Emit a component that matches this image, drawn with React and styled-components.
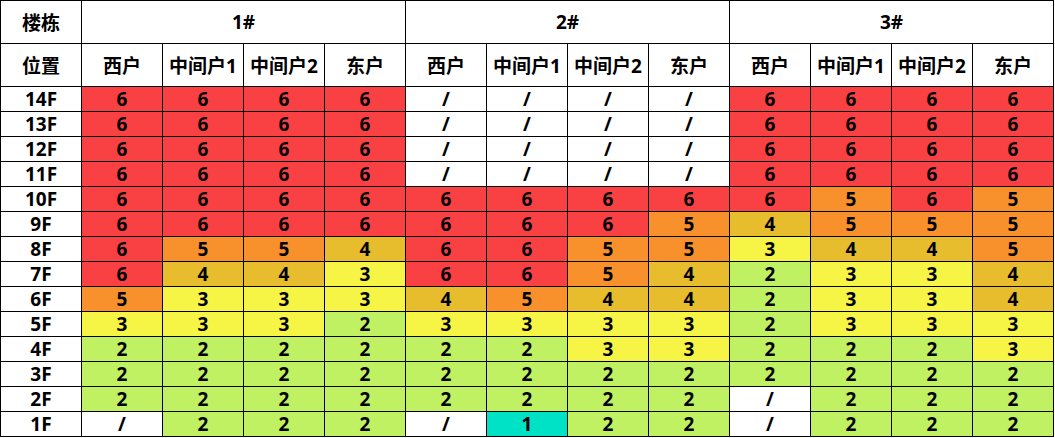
import React from "react";
import styled, { createGlobalStyle } from "styled-components";

const Global = createGlobalStyle`
  html, body { margin: 0; padding: 0; background: #ffffff; }
  body { font-family: "Open Sans", "Noto Sans CJK SC", sans-serif; }
`;

const COLORS = {
  "6": "#f94144",
  "5": "#f8902b",
  "4": "#e8bd2d",
  "3": "#f6f444",
  "2": "#c0f162",
  "1": "#00e2c5",
  "/": "#ffffff",
};

const Table = styled.table`
  border-collapse: collapse;
  table-layout: fixed;
  width: 1054px;
  font-family: "Open Sans", "Noto Sans CJK SC", sans-serif;
  font-weight: 700;
  color: #000;
`;

const Col = styled.col`
  width: 81px;
`;

const HeadCell = styled.th`
  border: 1px solid #000;
  height: 42px;
  padding: 0;
  font-size: 19px;
  font-weight: 700;
  text-align: center;
  vertical-align: middle;
  background: #fff;
  white-space: nowrap;
`;

const FloorCell = styled.th`
  border: 1px solid #000;
  height: 24px;
  padding: 0;
  font-size: 19px;
  font-weight: 700;
  text-align: center;
  line-height: 24px;
  background: #fff;
`;

const ValueCell = styled.td`
  border: 1px solid #000;
  height: 24px;
  padding: 0;
  font-size: 19px;
  font-weight: 700;
  text-align: center;
  line-height: 24px;
  background: ${(p) => COLORS[p.$v]};
`;

const buildings = ["1#", "2#", "3#"];
const units = ["西户", "中间户1", "中间户2", "东户"];

const rows = [
  ["14F", "6666", "////", "6666"],
  ["13F", "6666", "////", "6666"],
  ["12F", "6666", "////", "6666"],
  ["11F", "6666", "////", "6666"],
  ["10F", "6666", "6666", "6565"],
  ["9F", "6666", "6665", "4555"],
  ["8F", "6554", "6655", "3445"],
  ["7F", "6443", "6654", "2334"],
  ["6F", "5333", "4544", "2334"],
  ["5F", "3332", "3333", "2333"],
  ["4F", "2222", "2233", "2223"],
  ["3F", "2222", "2222", "2222"],
  ["2F", "2222", "2222", "/222"],
  ["1F", "/222", "/122", "/222"],
];

export default function App() {
  return (
    <>
      <Global />
      <Table>
        <colgroup>
          {Array.from({ length: 13 }).map((_, i) => (
            <Col key={i} />
          ))}
        </colgroup>
        <thead>
          <tr>
            <HeadCell>楼栋</HeadCell>
            {buildings.map((b) => (
              <HeadCell key={b} colSpan={4}>
                {b}
              </HeadCell>
            ))}
          </tr>
          <tr>
            <HeadCell>位置</HeadCell>
            {buildings.map((b) =>
              units.map((u) => <HeadCell key={b + u}>{u}</HeadCell>)
            )}
          </tr>
        </thead>
        <tbody>
          {rows.map(([floor, ...groups]) => (
            <tr key={floor}>
              <FloorCell>{floor}</FloorCell>
              {groups.map((g, gi) =>
                g.split("").map((v, vi) => (
                  <ValueCell key={gi + "-" + vi} $v={v}>
                    {v}
                  </ValueCell>
                ))
              )}
            </tr>
          ))}
        </tbody>
      </Table>
    </>
  );
}
